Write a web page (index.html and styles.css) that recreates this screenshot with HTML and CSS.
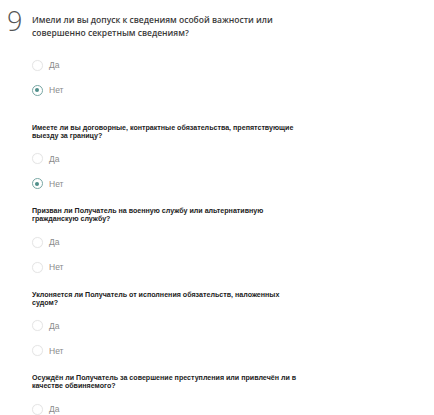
FILE: index.html
```html
<!DOCTYPE html>
<html lang="ru">
<head>
<meta charset="utf-8">
<title>Анкета</title>
<link rel="stylesheet" href="styles.css">
</head>
<body>
<main class="survey">
  <section class="question question-main">
    <div class="q-head">
      <span class="q-num">9</span>
      <h2 class="q-title-main">Имели ли вы допуск к сведениям особой важности или совершенно секретным сведениям?</h2>
    </div>
    <div class="options options-main">
      <label class="option"><input type="radio" name="q1"><span class="opt-text">Да</span></label>
      <label class="option"><input type="radio" name="q1" checked><span class="opt-text">Нет</span></label>
    </div>
  </section>

  <section class="question question-first">
    <h3 class="q-title">Имеете ли вы договорные, контрактные обязательства, препятствующие выезду за границу?</h3>
    <div class="options">
      <label class="option"><input type="radio" name="q2"><span class="opt-text">Да</span></label>
      <label class="option"><input type="radio" name="q2" checked><span class="opt-text">Нет</span></label>
    </div>
  </section>

  <section class="question">
    <h3 class="q-title">Призван ли Получатель на военную службу или альтернативную гражданскую службу?</h3>
    <div class="options">
      <label class="option"><input type="radio" name="q3"><span class="opt-text">Да</span></label>
      <label class="option"><input type="radio" name="q3"><span class="opt-text">Нет</span></label>
    </div>
  </section>

  <section class="question">
    <h3 class="q-title">Уклоняется ли Получатель от исполнения обязательств, наложенных судом?</h3>
    <div class="options">
      <label class="option"><input type="radio" name="q4"><span class="opt-text">Да</span></label>
      <label class="option"><input type="radio" name="q4"><span class="opt-text">Нет</span></label>
    </div>
  </section>

  <section class="question">
    <h3 class="q-title">Осуждён ли Получатель за совершение преступления или привлечён ли в качестве обвиняемого?</h3>
    <div class="options">
      <label class="option"><input type="radio" name="q5"><span class="opt-text">Да</span></label>
      <label class="option"><input type="radio" name="q5"><span class="opt-text">Нет</span></label>
    </div>
  </section>
</main>
</body>
</html>
```
FILE: styles.css
```css
html, body {
  margin: 0;
  padding: 0;
  background: #ffffff;
}

.survey {
  display: flex;
  flex-direction: column;
  padding: 7px 0 0 0;
}

.question {
  display: flex;
  flex-direction: column;
  padding-left: 32px;
  margin-top: 11px;
}

.question-main {
  padding-left: 7px;
  margin-top: 0;
}

.question-first {
  margin-top: 21px;
}

.q-head {
  display: flex;
  align-items: flex-start;
}

.q-num {
  width: 25px;
  flex: none;
  font-family: "Open Sans", sans-serif;
  font-weight: 300;
  font-size: 27px;
  line-height: 28px;
  color: #555555;
}

.q-title-main {
  margin: 5.5px 0 0 0;
  max-width: 272px;
  font-family: "Open Sans", sans-serif;
  font-weight: 600;
  font-size: 8.5px;
  line-height: 13px;
  color: #3a3a3a;
}

.q-title {
  margin: 0;
  max-width: 268px;
  font-family: "Liberation Sans", Arial, sans-serif;
  font-weight: 700;
  font-size: 7.1px;
  line-height: 8px;
  color: #222222;
}

.options {
  display: flex;
  flex-direction: column;
  margin-top: 6.5px;
}

.options-main {
  padding-left: 25px;
  margin-top: 14px;
}

.option {
  display: flex;
  align-items: center;
  height: 25px;
  gap: 6.5px;
}

.option input {
  appearance: none;
  -webkit-appearance: none;
  margin: 0 0 0 -0.5px;
  width: 11px;
  height: 11px;
  border-radius: 50%;
  border: 1px solid #e6e6e6;
  box-shadow: 0 0 1px rgba(0, 0, 0, 0.06);
  background: #ffffff;
  display: grid;
  place-items: center;
  box-sizing: border-box;
}

.option input:checked {
  border: 1px solid #7aa9a6;
}

.option input:checked::after {
  content: "";
  width: 4px;
  height: 4px;
  border-radius: 50%;
  background: #4f8e8a;
}

.opt-text {
  font-family: "Liberation Sans", Arial, sans-serif;
  font-size: 8.5px;
  color: #8a8a8a;
}
```
